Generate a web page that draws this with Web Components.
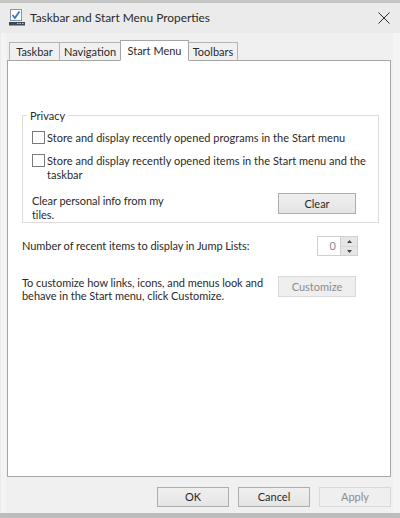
<!DOCTYPE html>
<html>
<head>
<meta charset="utf-8">
<title>Taskbar and Start Menu Properties</title>
<style>
  html, body { margin: 0; padding: 0; }
  body {
    width: 400px;
    height: 518px;
    overflow: hidden;
    font: 11px/14px Lato, sans-serif;
    color: #2a2a2a;
  }
</style>
</head>
<body>
<props-window>
  <span slot="title">Taskbar and Start Menu Properties</span>
  <tab-strip slot="tabs">
    <tab-item style="width:51px">Taskbar</tab-item>
    <tab-item style="width:62px">Navigation</tab-item>
    <tab-item style="width:69px" active>Start Menu</tab-item>
    <tab-item style="width:50px">Toolbars</tab-item>
  </tab-strip>

  <group-box label="Privacy">
    <check-row>Store and display recently opened programs in the Start menu</check-row>
    <check-row>Store and display recently opened items in the Start menu and the taskbar</check-row>
    <action-row class="clear-row">
      <span>Clear personal info from my tiles.</span>
      <win-button slot="action">Clear</win-button>
    </action-row>
  </group-box>

  <jump-row>
    <span>Number of recent items to display in Jump Lists:</span>
    <spin-box value="0" slot="action"></spin-box>
  </jump-row>

  <action-row wide>
    <span>To customize how links, icons, and menus look and behave in the Start menu, click Customize.</span>
    <win-button slot="action" disabled>Customize</win-button>
  </action-row>

  <win-button slot="footer">OK</win-button>
  <win-button slot="footer">Cancel</win-button>
  <win-button slot="footer" disabled>Apply</win-button>
</props-window>

<script>
class PropsWindow extends HTMLElement {
  constructor() {
    super();
    this.attachShadow({ mode: "open" });
    this.shadowRoot.innerHTML = `
    <style>
      :host {
        display: flex;
        flex-direction: column;
        width: 400px;
        height: 518px;
        box-sizing: border-box;
        background: linear-gradient(90deg, #ebebeb 0 1px, #f4f4f4 1px 6px, #f0f0f0 6px 393px, #f5f5f5 393px);
        border-top: 3px solid #c6c6c6;
        border-bottom: 5px solid #bdbdbd;
      }

      .title {
        display: flex;
        align-items: center;
        height: 30px;
        flex: none;
        padding: 0 10px 0 9px;
        background: #ebebeb;
        font-size: 11.9px;
        color: #2a2a2a;
      }

      .title svg.app { margin-right: 5px; }
      .title .text { flex: 1; }

      .tabs {
        flex: none;
        height: 27px;
        padding-left: 9px;
        display: flex;
        align-items: flex-end;
      }

      .panel {
        flex: none;
        height: 417px;
        width: 384px;
        box-sizing: border-box;
        margin-left: 7px;
        background: #fff;
        border: 1px solid #a6a6a6;
        padding: 54px 11px 0 14px;
      }

      .footer {
        display: flex;
        justify-content: flex-end;
        gap: 9px;
        padding: 10px 9px 0 0;
      }

      ::slotted(win-button[slot="footer"]) { width: 72px; height: 20px; }
    </style>
    <div class="title">
      <svg class="app" width="16" height="18" viewBox="0 0 16 18">
        <rect x="1.5" y="0.5" width="11" height="11" fill="#fff" stroke="#8a94a3"/>
        <path d="M3.5 6l2.4 3L10.5 2.5" fill="none" stroke="#3a76c8" stroke-width="1.8"/>
        <rect x="0" y="13" width="16" height="3.5" fill="#3f4856"/>
        <path d="M8 14.5h1.5M10.5 14.5h1.5M13 14.5h1.5" stroke="#c3c9d2" stroke-width="1"/>
      </svg>
      <span class="text"><slot name="title"></slot></span>
      <svg class="close" width="12" height="12" viewBox="0 0 12 12">
        <path d="M0.5 0.5l11 11M11.5 0.5l-11 11" stroke="#2b2b2b" stroke-width="1"/>
      </svg>
    </div>
    <div class="tabs"><slot name="tabs"></slot></div>
    <div class="panel"><slot></slot></div>
    <div class="footer"><slot name="footer"></slot></div>
  `;
  }
}

class TabStrip extends HTMLElement {
  constructor() {
    super();
    this.attachShadow({ mode: "open" });
    this.shadowRoot.innerHTML = `
    <style>
      :host { display: flex; align-items: flex-end; position: relative; top: 1px; }
    </style>
    <slot></slot>
  `;
  }
}

class TabItem extends HTMLElement {
  constructor() {
    super();
    this.attachShadow({ mode: "open" });
    this.shadowRoot.innerHTML = `
    <style>
      :host {
        display: flex;
        align-items: center;
        justify-content: center;
        box-sizing: border-box;
        height: 19px;
        margin-right: -1px;
        background: #f0f0f0;
        border: 1px solid #b4b4b4;
        border-bottom: 1px solid #a6a6a6;
        white-space: nowrap;
      }

      :host([active]) {
        height: 21px;
        background: #fff;
        border-color: #a6a6a6;
        border-bottom-color: #fff;
        position: relative;
        z-index: 1;
      }
    </style>
    <slot></slot>
  `;
  }
}

class GroupBox extends HTMLElement {
  constructor() {
    super();
    this.attachShadow({ mode: "open" });
    this.shadowRoot.innerHTML = `
    <style>
      :host {
        display: block;
        position: relative;
        box-sizing: border-box;
        width: 357px;
        height: 108px;
        border: 1px solid #dcdcdc;
        padding: 15px 0 0 9px;
      }

      .label {
        position: absolute;
        top: -7px;
        left: 4px;
        padding: 0 3px;
        background: #fff;
      }
    </style>
    <span class="label"></span>
    <slot></slot>
  `;
    this.shadowRoot.querySelector(".label").textContent = this.getAttribute("label");
  }
}

class CheckRow extends HTMLElement {
  constructor() {
    super();
    this.attachShadow({ mode: "open" });
    this.shadowRoot.innerHTML = `
    <style>
      :host {
        display: flex;
        align-items: flex-start;
        width: 340px;
        margin-bottom: 9px;
        letter-spacing: 0.03px;
      }

      .box {
        flex: none;
        width: 13px;
        height: 13px;
        box-sizing: border-box;
        margin: 0 2px 0 0;
        border: 1px solid #7a7a7a;
        background: #fff;
      }
    </style>
    <div class="box"></div>
    <div><slot></slot></div>
  `;
  }
}

class ActionRow extends HTMLElement {
  constructor() {
    super();
    this.attachShadow({ mode: "open" });
    this.shadowRoot.innerHTML = `
    <style>
      :host {
        display: grid;
        grid-template-columns: 145px 78px;
        column-gap: 101px;
        align-items: start;
      }

      :host(.clear-row) { margin-top: 11px; }
      :host(.clear-row) ::slotted(span) { margin-top: 1px; letter-spacing: -0.07px; }

      :host([wide]) {
        grid-template-columns: 250px 78px;
        column-gap: 6px;
        margin-top: 20px;
        line-height: 13px;
      }

      :host([wide]) ::slotted(span) { letter-spacing: -0.04px; }

      ::slotted(win-button) { height: 21px; }
    </style>
    <slot></slot>
    <slot name="action"></slot>
  `;
  }
}

class JumpRow extends HTMLElement {
  constructor() {
    super();
    this.attachShadow({ mode: "open" });
    this.shadowRoot.innerHTML = `
    <style>
      :host {
        display: flex;
        justify-content: space-between;
        align-items: center;
        width: 336px;
        height: 20px;
        margin-top: 13px;
      }

      ::slotted(span) { letter-spacing: -0.06px; }
    </style>
    <slot></slot>
    <slot name="action"></slot>
  `;
  }
}

class SpinBox extends HTMLElement {
  constructor() {
    super();
    this.attachShadow({ mode: "open" });
    this.shadowRoot.innerHTML = `
    <style>
      :host {
        display: flex;
        box-sizing: border-box;
        width: 41px;
        height: 20px;
        border: 1px solid #d0d0d0;
        background: #fff;
        color: #8a8a8a;
      }

      .value { flex: 1; text-align: right; padding: 2px 4px 0 0; }

      .arrows {
        width: 17px;
        display: grid;
        grid-template-rows: 1fr 1fr;
        background: #e6e6e6;
        border-left: 1px solid #d0d0d0;
        box-sizing: border-box;
      }

      .arrows span { display: flex; align-items: center; justify-content: center; }
      .arrows span + span { border-top: 1px solid #d8d8d8; }
    </style>
    <div class="value"></div>
    <div class="arrows">
      <span><svg width="5" height="3"><path d="M2.5 0L5 3H0z" fill="#444"/></svg></span>
      <span><svg width="5" height="3"><path d="M0 0h5L2.5 3z" fill="#444"/></svg></span>
    </div>
  `;
    this.shadowRoot.querySelector(".value").textContent = this.getAttribute("value");
  }
}

class WinButton extends HTMLElement {
  constructor() {
    super();
    this.attachShadow({ mode: "open" });
    this.shadowRoot.innerHTML = `
    <style>
      :host {
        display: flex;
        align-items: center;
        justify-content: center;
        box-sizing: border-box;
        border: 1px solid #adadad;
        background: linear-gradient(#efefef, #e5e5e5);
        color: #2a2a2a;
      }

      :host([disabled]) {
        border-color: #d9d9d9;
        background: #efefef;
        color: #8c8c8c;
      }
    </style>
    <slot></slot>
  `;
  }
}

customElements.define("props-window", PropsWindow);
customElements.define("tab-strip", TabStrip);
customElements.define("tab-item", TabItem);
customElements.define("group-box", GroupBox);
customElements.define("check-row", CheckRow);
customElements.define("action-row", ActionRow);
customElements.define("jump-row", JumpRow);
customElements.define("spin-box", SpinBox);
customElements.define("win-button", WinButton);
</script>
</body>
</html>
